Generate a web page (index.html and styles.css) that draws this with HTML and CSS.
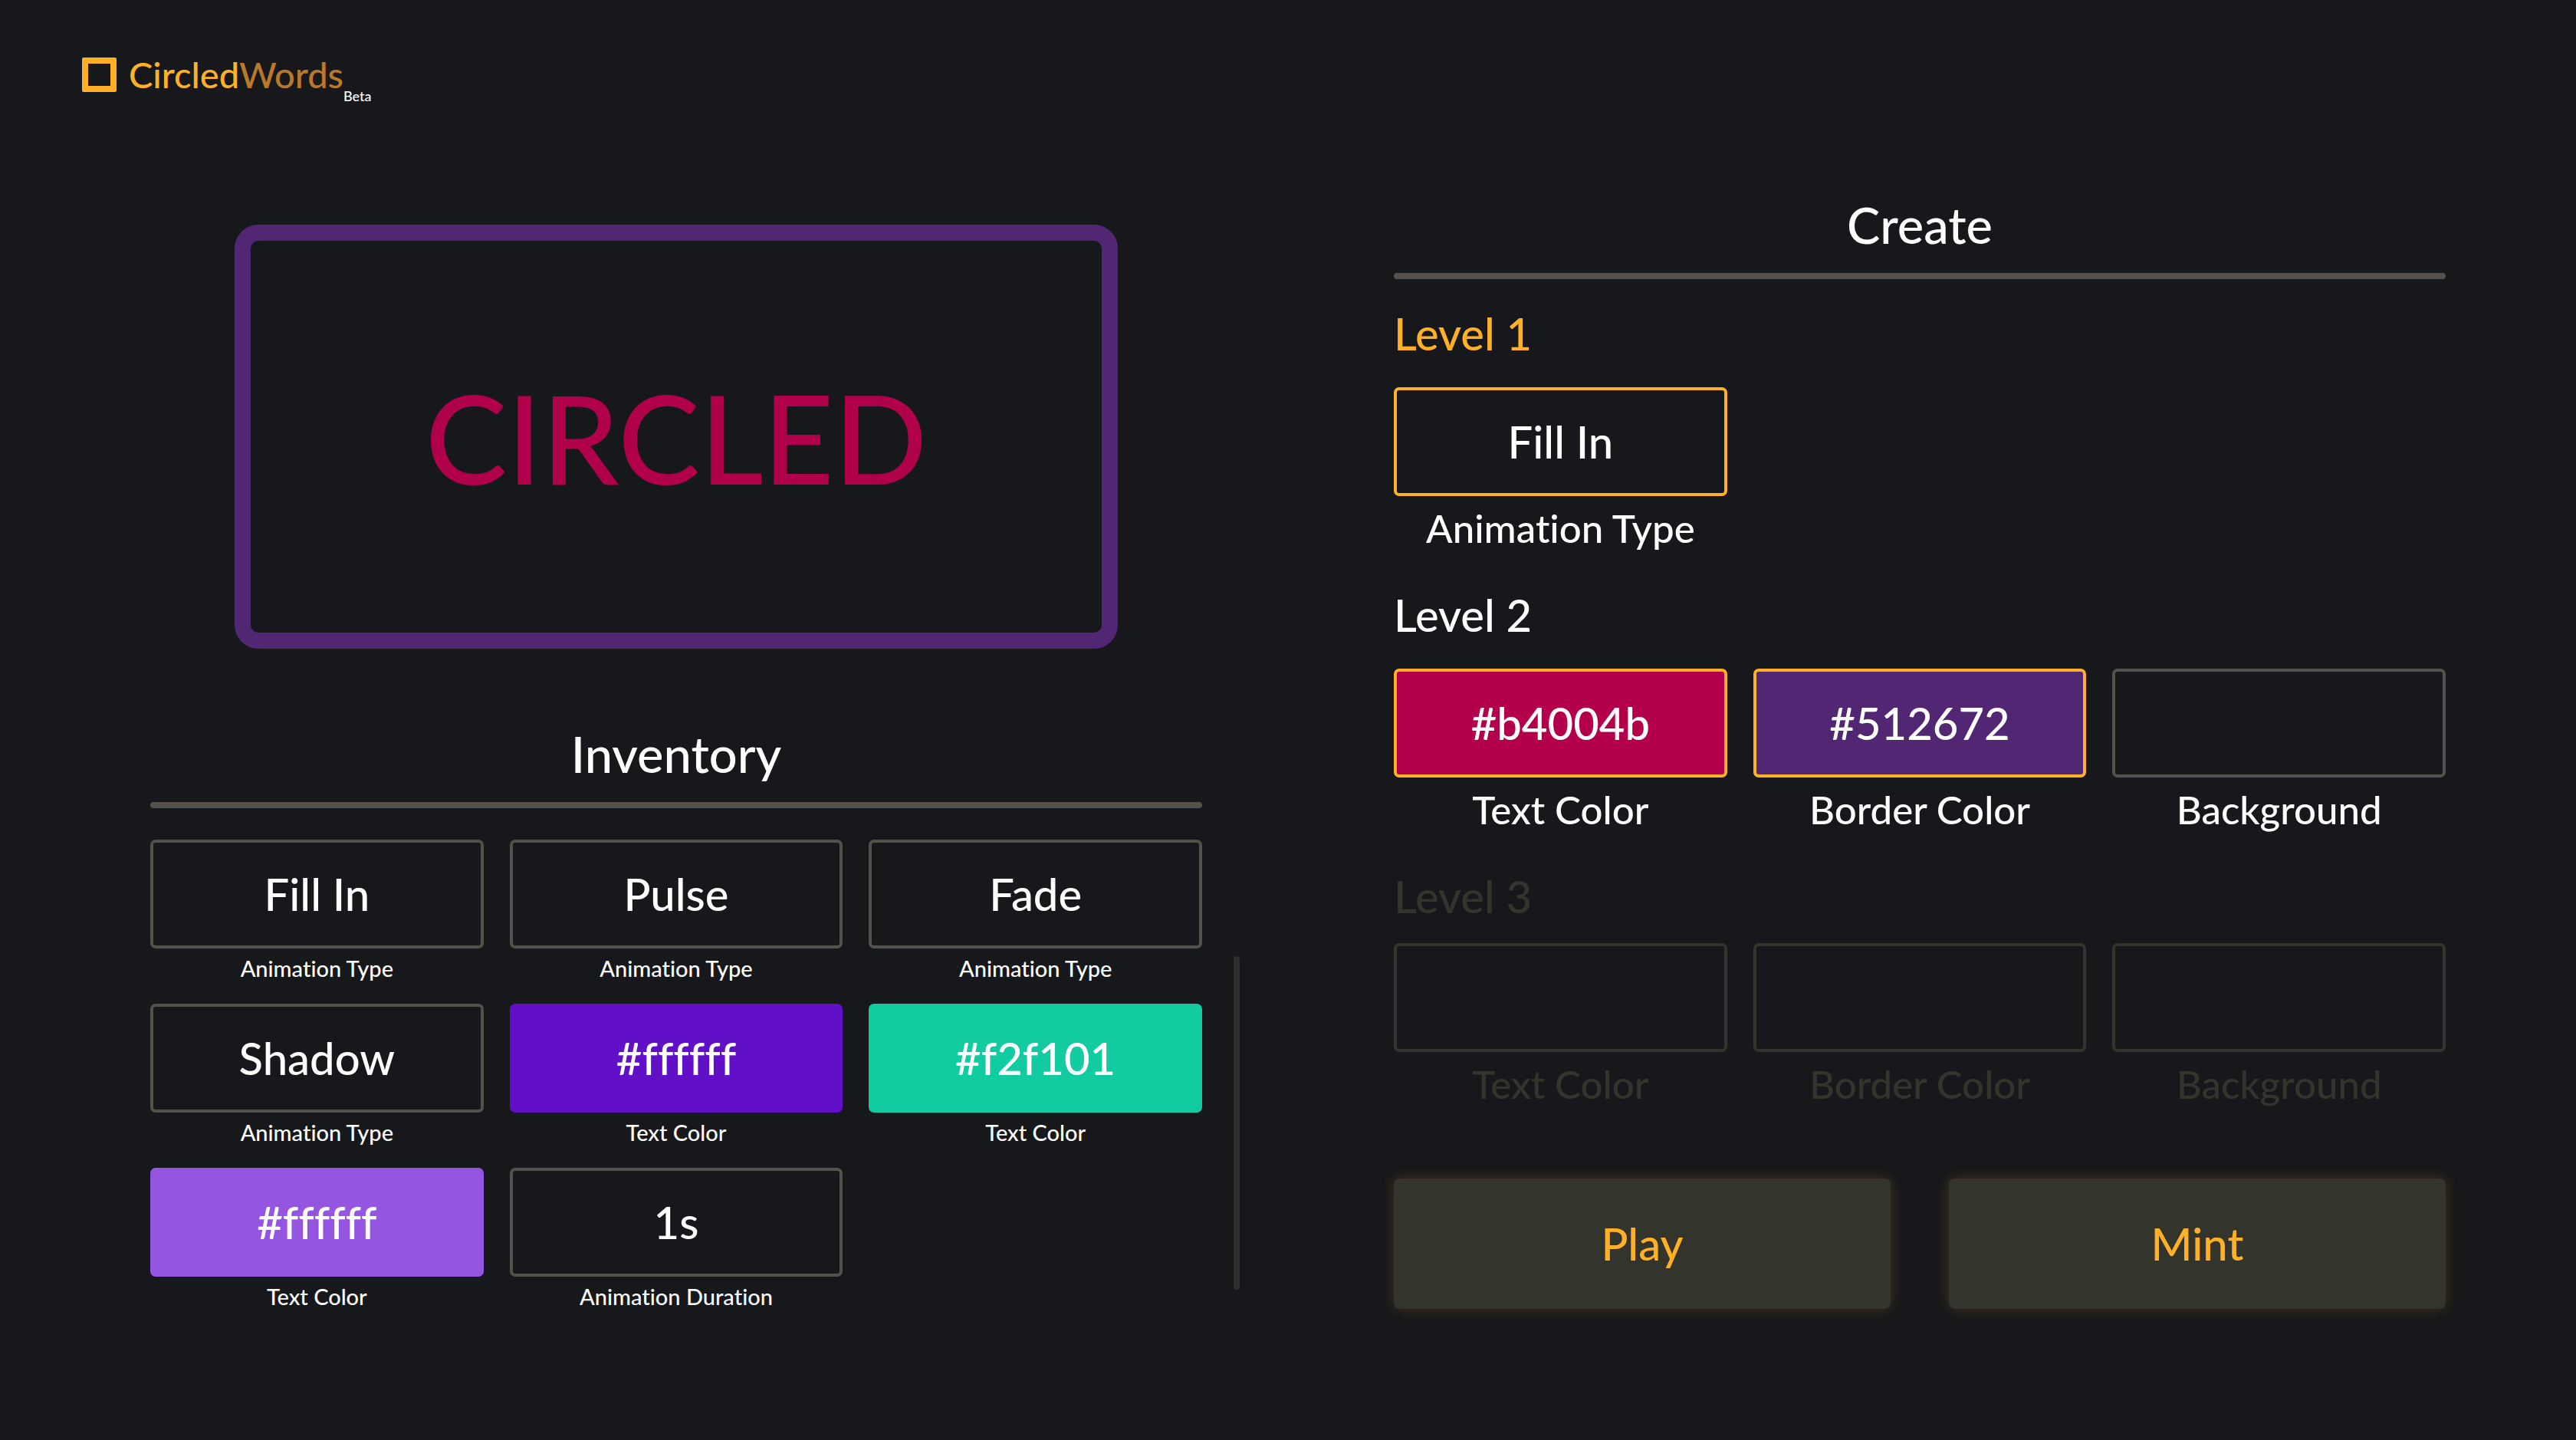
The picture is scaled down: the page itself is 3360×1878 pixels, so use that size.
FILE: index.html
```html
<!DOCTYPE html>
<html lang="en">
<head>
<meta charset="utf-8">
<meta name="viewport" content="width=device-width, initial-scale=1">
<title>CircledWords</title>
<link rel="stylesheet" href="styles.css">
</head>
<body>
<header class="header">
  <a class="brand" href="#">
    <span class="brand-mark"></span>
    <span class="brand-name">Circled<span class="brand-tail">Words</span></span>
    <span class="brand-beta">Beta</span>
  </a>
</header>
<main class="main">
  <div class="column">
    <section class="preview"><span class="preview-word">CIRCLED</span></section>
    <section class="inventory">
      <h2 class="title">Inventory</h2>
      <div class="slots slots-inventory">
        <div class="item"><button class="slot" id="i1">Fill In</button><label class="caption" for="i1">Animation Type</label></div>
        <div class="item"><button class="slot" id="i2">Pulse</button><label class="caption" for="i2">Animation Type</label></div>
        <div class="item"><button class="slot" id="i3">Fade</button><label class="caption" for="i3">Animation Type</label></div>
        <div class="item"><button class="slot" id="i4">Shadow</button><label class="caption" for="i4">Animation Type</label></div>
        <div class="item"><button class="slot slot-violet" id="i5">#ffffff</button><label class="caption" for="i5">Text Color</label></div>
        <div class="item"><button class="slot slot-green" id="i6">#f2f101</button><label class="caption" for="i6">Text Color</label></div>
        <div class="item"><button class="slot slot-lavender" id="i7">#ffffff</button><label class="caption" for="i7">Text Color</label></div>
        <div class="item"><button class="slot" id="i8">1s</button><label class="caption" for="i8">Animation Duration</label></div>
      </div>
      <div class="scroll-thumb"></div>
    </section>
  </div>
  <section class="column">
    <h2 class="title">Create</h2>
    <section class="level level-current">
      <h3 class="level-title">Level 1</h3>
      <div class="slots">
        <div class="item"><button class="slot slot-filled" id="l1a">Fill In</button><label class="caption" for="l1a">Animation Type</label></div>
      </div>
    </section>
    <section class="level">
      <h3 class="level-title">Level 2</h3>
      <div class="slots">
        <div class="item"><button class="slot slot-filled slot-crimson" id="l2a">#b4004b</button><label class="caption" for="l2a">Text Color</label></div>
        <div class="item"><button class="slot slot-filled slot-purple" id="l2b">#512672</button><label class="caption" for="l2b">Border Color</label></div>
        <div class="item"><button class="slot" id="l2c"></button><label class="caption" for="l2c">Background</label></div>
      </div>
    </section>
    <section class="level level-locked">
      <h3 class="level-title">Level 3</h3>
      <div class="slots">
        <div class="item"><button class="slot" id="l3a" disabled></button><label class="caption" for="l3a">Text Color</label></div>
        <div class="item"><button class="slot" id="l3b" disabled></button><label class="caption" for="l3b">Border Color</label></div>
        <div class="item"><button class="slot" id="l3c" disabled></button><label class="caption" for="l3c">Background</label></div>
      </div>
    </section>
    <div class="actions">
      <button class="action">Play</button>
      <button class="action">Mint</button>
    </div>
  </section>
</main>
</body>
</html>
```
FILE: styles.css
```css
:root {
  --bg: #17181b;
  --line: #52524a;
  --dim: #33342c;
  --accent: #ffb027;
}

* { box-sizing: border-box; }

body {
  margin: 0;
  min-height: 100vh;
  background: var(--bg);
  color: #fff;
  font-family: Lato, "Open Sans", sans-serif;
  font-weight: 500;
  font-variant-ligatures: none;
}

h2, h3 { margin: 0; font-weight: inherit; }

button {
  color: inherit;
  font: inherit;
  font-variant-ligatures: none;
  cursor: pointer;
}

.header { padding: 58px 107px 117px; }

.brand {
  display: inline-flex;
  align-items: center;
  color: var(--accent);
  text-decoration: none;
}

.brand-mark {
  width: 45px;
  height: 45px;
  margin-right: 16px;
  border: 8px solid var(--accent);
  border-radius: 2px;
}

.brand-name { font-size: 47px; line-height: 56px; }
.brand-tail { color: #b9782a; }

.brand-beta {
  padding-top: 56px;
  color: #fff;
  font-size: 18px;
  line-height: 22px;
}

.main {
  display: grid;
  grid-template-columns: 1fr 1fr;
  gap: 250px;
  padding: 0 170px 100px 196px;
}

.preview {
  display: flex;
  align-items: center;
  justify-content: center;
  width: 84%;
  min-height: 553px;
  margin: 40px auto 97px;
  border: 21px solid #512672;
  border-radius: 31px;
}

.preview-word {
  color: #b0004a;
  font-size: 160px;
  line-height: 208px;
}

.inventory { position: relative; }

.title {
  font-size: 65px;
  line-height: 80px;
  text-align: center;
}

.title::after {
  content: "";
  display: block;
  height: 8px;
  margin-top: 23px;
  border-radius: 4px;
  background: var(--line);
}

.slots {
  display: grid;
  grid-template-columns: repeat(3, 1fr);
  gap: 29px 34px;
}

.slots-inventory { margin-top: 41px; }

.item {
  display: flex;
  flex-direction: column;
  gap: 11px;
}

.slot {
  height: 142px;
  padding: 0;
  border: 4px solid var(--line);
  border-radius: 7px;
  background: none;
  font-size: 58px;
  line-height: 70px;
}

.slot-filled { border-color: var(--accent); }
.slot-violet { border-color: #6110c8; background: #6110c8; }
.slot-green { border-color: #12cba0; background: #12cba0; }
.slot-lavender { border-color: #9455e0; background: #9455e0; }
.slot-crimson { background: #b4004b; }
.slot-purple { background: #512672; }

.caption {
  font-size: 51px;
  line-height: 62px;
  text-align: center;
}

.slots-inventory .item { gap: 8px; }
.slots-inventory .caption { font-size: 29px; line-height: 35px; }

.scroll-thumb {
  position: absolute;
  top: 304px;
  right: -49px;
  width: 8px;
  height: 435px;
  border-radius: 4px;
  background: #2e2f2d;
}

.level { margin-top: 47px; }

.level-title {
  margin-bottom: 35px;
  font-size: 58px;
  line-height: 70px;
}

.level-current { margin-top: 36px; }
.level-current .level-title { color: var(--accent); }
.level-locked { color: var(--dim); }
.level-locked .level-title { margin-bottom: 26px; }
.level-locked .slot { border-color: var(--dim); }

.actions {
  display: grid;
  grid-template-columns: 1fr 1fr;
  gap: 76px;
  margin-top: 92px;
}

.action {
  height: 170px;
  border: 0;
  border-radius: 8px;
  background: var(--dim);
  box-shadow: 0 0 18px rgba(255, 160, 30, 0.2);
  color: var(--accent);
  font-size: 58px;
  line-height: 70px;
}
```
